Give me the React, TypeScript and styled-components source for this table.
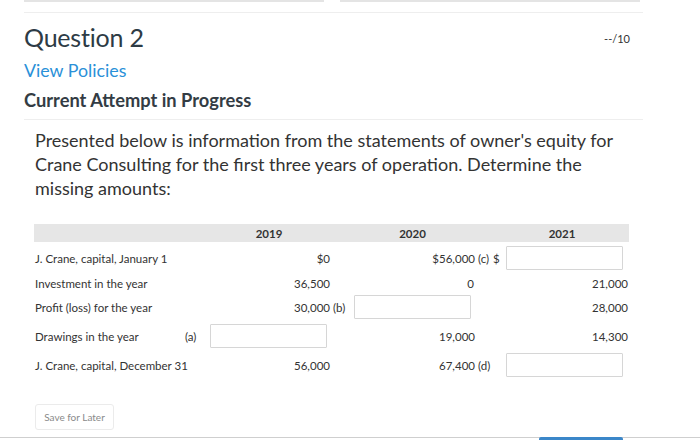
import React from "react";
import styled, { createGlobalStyle } from "styled-components";

const Global = createGlobalStyle`
  html, body { margin: 0; padding: 0; background: #fff; }
  body { font-family: Lato, "Open Sans", sans-serif; color: #333; }
  * { box-sizing: border-box; }
`;

const Page = styled.div`
  width: 700px;
  height: 440px;
  position: relative;
  overflow: hidden;
  display: flex;
  flex-direction: column;
`;

const TopBars = styled.div`
  display: flex;
  gap: 16px;
  padding-left: 24px;
  width: 640px;
`;

const TopBar = styled.div`
  flex: 1;
  height: 2px;
  background: #e4e4e4;
`;

const Rule = styled.div<{ $mt: number; $color?: string }>`
  margin: ${(p) => p.$mt}px 0 0 24px;
  width: 619px;
  height: 1px;
  background: ${(p) => p.$color || "#eeeeee"};
`;

const Head = styled.div`
  display: flex;
  justify-content: space-between;
  align-items: center;
  padding: 0 70px 0 24px;
  margin-top: 8px;
  height: 32px;
`;

const Title = styled.h1`
  margin: 0;
  font-size: 25px;
  font-weight: 400;
  color: #2d3b45;
  letter-spacing: -0.2px;
`;

const Points = styled.span`
  font-size: 11px;
  color: #333;
  margin-top: 3px;
`;

const PolicyLink = styled.a`
  margin: 6px 0 0 24px;
  font-size: 17.8px;
  line-height: 22px;
  color: #2a90d8;
  text-decoration: none;
`;

const Attempt = styled.h2`
  margin: 8px 0 0 24px;
  font-size: 18.3px;
  line-height: 22px;
  font-weight: 700;
  color: #333c44;
`;

const Prompt = styled.p`
  margin: 8px 0 0 35px;
  width: 585px;
  font-size: 18px;
  line-height: 24px;
  color: #333;
`;

const Table = styled.div`
  margin: 24px 0 0 34px;
  width: 595px;
  display: flex;
  flex-direction: column;
  font-size: 11.5px;
  color: #333;
`;

const Row = styled.div<{ $mt?: number; $h?: number; $head?: boolean }>`
  display: grid;
  grid-template-columns: 151px 23px 122px 20px 125px 28px 126px;
  align-items: center;
  margin-top: ${(p) => p.$mt ?? 0}px;
  height: ${(p) => p.$h ?? 24}px;
  background: ${(p) => (p.$head ? "#e6e6e6" : "transparent")};
  font-weight: ${(p) => (p.$head ? 700 : 400)};
`;

const Cell = styled.div<{ $align?: "left" | "right" | "center"; $col?: number; $pr?: number; $pl?: number }>`
  grid-column: ${(p) => p.$col ?? "auto"};
  text-align: ${(p) => p.$align || "left"};
  padding-right: ${(p) => p.$pr ?? 0}px;
  padding-left: ${(p) => p.$pl ?? 0}px;
  white-space: nowrap;
  word-spacing: 1px;
`;

const Label = styled(Cell)`
  padding-left: 1px;
  word-spacing: 0;
`;

const Answer = styled.input<{ $col: number; $mr: number }>`
  grid-column: ${(p) => p.$col};
  justify-self: end;
  margin-right: ${(p) => p.$mr}px;
  width: 117px;
  height: 24px;
  border: 1px solid #d6d6d6;
  border-radius: 1px;
  background: #fff;
  outline: none;
`;

const Footer = styled.div`
  margin: 27px 0 0 35px;
`;

const SaveButton = styled.button`
  width: 79px;
  height: 26px;
  border: 1px solid #ebebeb;
  border-radius: 3px;
  background: #fff;
  color: #8a8a8a;
  font-family: Lato, sans-serif;
  font-size: 10px;
  padding: 0;
`;

const BottomLine = styled.div`
  position: absolute;
  left: 0;
  right: 0;
  bottom: 2px;
  height: 1px;
  background: #cfcfcf;
`;

const ActiveTab = styled.div`
  position: absolute;
  left: 539px;
  width: 84px;
  bottom: 0;
  height: 3px;
  border-radius: 2px 2px 0 0;
  background: #3b87c9;
`;

export default function App() {
  return (
    <>
      <Global />
      <Page>
        <TopBars>
          <TopBar />
          <TopBar />
        </TopBars>
        <Rule $mt={10} />
        <Head>
          <Title>Question 2</Title>
          <Points>--/10</Points>
        </Head>
        <PolicyLink href="#">View Policies</PolicyLink>
        <Attempt>Current Attempt in Progress</Attempt>
        <Rule $mt={8} />
        <Prompt>
          Presented below is information from the statements of owner's equity for Crane Consulting
          for the first three years of operation. Determine the missing amounts:
        </Prompt>
        <Table>
          <Row $head $h={18}>
            <Cell $col={3} $align="center">2019</Cell>
            <Cell $col={5} $align="center">2020</Cell>
            <Cell $col={7} $align="center" $pr={8}>2021</Cell>
          </Row>
          <Row $mt={4}>
            <Label>J. Crane, capital, January 1</Label>
            <Cell $col={3} $align="right">$0</Cell>
            <Cell $col={5} $align="right">$56,000</Cell>
            <Cell $col={6} $pl={3}>(c) $</Cell>
            <Answer $col={7} $mr={6} />
          </Row>
          <Row $mt={1}>
            <Label>Investment in the year</Label>
            <Cell $col={3} $align="right">36,500</Cell>
            <Cell $col={5} $align="right" $pr={1}>0</Cell>
            <Cell $col={7} $align="right" $pr={1}>21,000</Cell>
          </Row>
          <Row>
            <Label>Profit (loss) for the year</Label>
            <Cell $col={3} $align="right">30,000</Cell>
            <Cell $col={4} $pl={3}>(b)</Cell>
            <Answer $col={5} $mr={4} />
            <Cell $col={7} $align="right" $pr={1}>28,000</Cell>
          </Row>
          <Row $mt={5}>
            <Label>Drawings in the year</Label>
            <Cell $col={2}>(a)</Cell>
            <Answer $col={3} $mr={3} />
            <Cell $col={5} $align="right">19,000</Cell>
            <Cell $col={7} $align="right" $pr={1}>14,300</Cell>
          </Row>
          <Row $mt={5}>
            <Label>J. Crane, capital, December 31</Label>
            <Cell $col={3} $align="right">56,000</Cell>
            <Cell $col={5} $align="right">67,400</Cell>
            <Cell $col={6} $pl={3}>(d)</Cell>
            <Answer $col={7} $mr={6} />
          </Row>
        </Table>
        <Footer>
          <SaveButton>Save for Later</SaveButton>
        </Footer>
        <BottomLine />
        <ActiveTab />
      </Page>
    </>
  );
}
